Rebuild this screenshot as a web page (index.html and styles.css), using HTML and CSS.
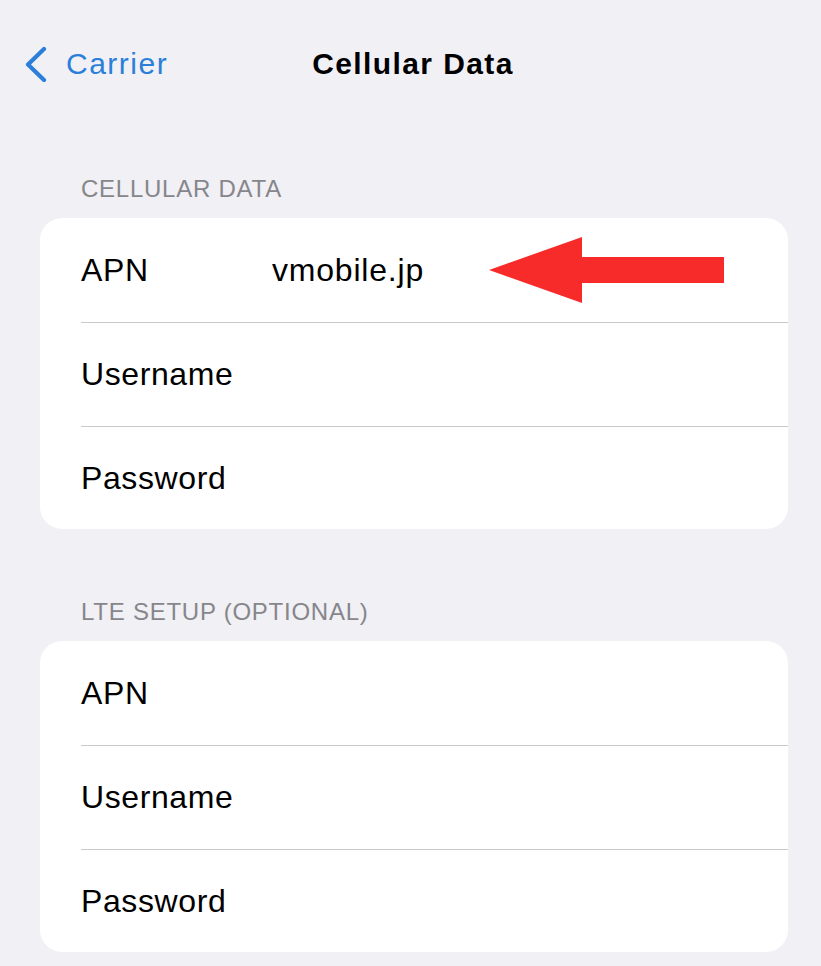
FILE: index.html
```html
<!DOCTYPE html>
<html lang="en">
<head>
<meta charset="utf-8">
<title>Cellular Data</title>
<link rel="stylesheet" href="styles.css">
</head>
<body>
  <header class="nav">
    <a class="back" href="#">
      <svg class="chev" width="22" height="36" viewBox="0 0 22 36"><polyline points="19,3 3,18.5 19,34" fill="none" stroke="#2b7fd9" stroke-width="4.2" stroke-linecap="round" stroke-linejoin="round"/></svg>
      <span class="back-label">Carrier</span>
    </a>
    <h1 class="title">Cellular Data</h1>
    <span class="spacer"></span>
  </header>

  <section class="group">
    <h2 class="group-header">CELLULAR DATA</h2>
    <div class="card">
      <div class="row"><div class="cell"><span class="label">APN</span><span class="value">vmobile.jp</span></div>
        <svg class="arrow" width="238" height="68" viewBox="0 0 238 68"><polygon points="1,34 94,1 94,21 236,21 236,47 94,47 94,67" fill="#f82b2b"/></svg>
      </div>
      <div class="row"><div class="cell sep"><span class="label">Username</span></div></div>
      <div class="row last"><div class="cell sep"><span class="label">Password</span></div></div>
    </div>
  </section>

  <section class="group">
    <h2 class="group-header">LTE SETUP (OPTIONAL)</h2>
    <div class="card">
      <div class="row"><div class="cell"><span class="label">APN</span></div></div>
      <div class="row"><div class="cell sep"><span class="label">Username</span></div></div>
      <div class="row last"><div class="cell sep"><span class="label">Password</span></div></div>
    </div>
  </section>
</body>
</html>
```

FILE: styles.css
```css
* { box-sizing: border-box; }

html, body {
  margin: 0;
  padding: 0;
  background: #f0f0f5;
  font-family: "Liberation Sans", Arial, sans-serif;
  color: #000;
}

body {
  width: 821px;
  height: 966px;
  overflow: hidden;
}

.nav {
  display: grid;
  grid-template-columns: 1fr auto 1fr;
  align-items: center;
  height: 106px;
  padding: 46px 20px 26px 25px;
}

.back {
  display: flex;
  align-items: center;
  gap: 19px;
  text-decoration: none;
  color: #2b7fd9;
}

.chev { display: block; }

.back-label {
  font-size: 30px;
  line-height: 34px;
  letter-spacing: 1.5px;
}

.title {
  margin: 0;
  font-size: 30px;
  line-height: 34px;
  font-weight: 700;
  letter-spacing: 1.4px;
}

.group {
  margin: 0 33px 0 40px;
  padding-top: 69px;
}

.group-header {
  margin: 0 0 15px;
  padding-left: 41px;
  font-size: 24px;
  line-height: 28px;
  font-weight: 400;
  color: #86868b;
  letter-spacing: 0.75px;
}

.card {
  background: #fff;
  border-radius: 22px;
  overflow: hidden;
}

.row {
  position: relative;
  height: 104px;
  padding-left: 41px;
}

.row.last { height: 103px; }

.cell {
  display: flex;
  align-items: center;
  height: 100%;
  font-size: 32px;
  letter-spacing: 0.6px;
}

.cell.sep { border-top: 1px solid #c9c9cd; }

.label { width: 191px; }

.value { letter-spacing: 0.8px; }

.arrow {
  position: absolute;
  left: 448px;
  top: 18px;
}
```
